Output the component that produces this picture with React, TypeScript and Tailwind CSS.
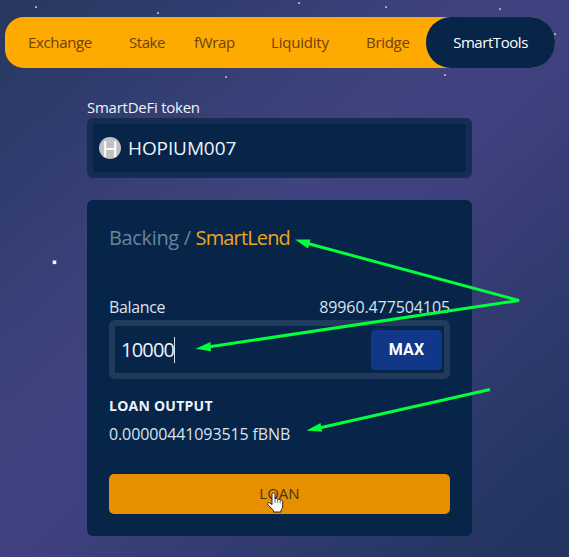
const tabs = [
  { label: "Exchange", slot: "w-[101px]", tracking: "tracking-[-0.35px]" },
  { label: "Stake", slot: "w-[65px]", tracking: "tracking-[-0.45px]" },
  { label: "fWrap", slot: "w-[77px]", tracking: "tracking-[-0.35px]" },
  { label: "Liquidity", slot: "w-[95px]", tracking: "tracking-[-0.2px]" },
  { label: "Bridge", slot: "w-[60px]", tracking: "tracking-[-0.3px]" },
];

const stars = [
  [36, 7], [158, 13], [226, 77], [299, 3], [386, 7], [500, 9], [555, 34], [445, 75],
];

function Starfield() {
  return (
    <svg className="pointer-events-none absolute inset-0 h-full w-full" viewBox="0 0 569 557">
      {stars.map(([x, y]) => (
        <rect key={`${x}-${y}`} x={x - 0.8} y={y - 0.8} width="1.8" height="1.8" fill="#b8bde4" />
      ))}
      <rect x="52.7" y="260.5" width="3.6" height="3.6" fill="#f4f5ff" />
    </svg>
  );
}

function Arrows() {
  return (
    <svg className="pointer-events-none absolute inset-0 h-full w-full" viewBox="0 0 569 557">
      <g fill="none" stroke="#00ff3c" strokeWidth="3" strokeLinejoin="miter">
        <path d="M306 243 519 300.5 208 347" />
        <path d="M319 428 490 389.5" />
      </g>
      <g fill="#00ff3c">
        <path d="M295 239.5 310.5 239.5 308 248.500Z" />
        <path d="M195.500 348.700 210.500 342 211 351.200Z" />
        <path d="M306.500 430.500 320.500 423 322 431.800Z" />
      </g>
    </svg>
  );
}

function HandCursor() {
  return (
    <svg className="absolute left-[158px] top-[18px] h-[22px] w-[17px]" viewBox="0 0 17 22">
      <path
        d="M5 2.200C5 .3 8 .3 8 2.200V7C8.500 6.200 10.500 6.400 10.700 7.600 11.400 6.900 13 7.200 13.200 8.400 14.200 7.700 15.700 8.300 15.700 9.700V14C15.700 16 14.500 17 14 18.500V20H6.500V18.500L1 12.800C-.1 11.200 1.500 9.900 2.900 10.900L5 12.600Z"
        fill="white"
        stroke="#17140f"
        strokeWidth="0.9"
      />
      <path d="M8 7V11M10.700 8V11M13.200 9V11.500" stroke="#333" strokeWidth="0.7" />
    </svg>
  );
}

export default function App() {
  return (
    <div className="relative h-[557px] w-[569px] overflow-hidden bg-[linear-gradient(138deg,#27385f_0%,#303c6d_17%,#394077_30%,#3f437e_42%,#3f417e_54%,#363c74_66%,#2b3969_80%,#22345f_96%)] font-['Open_Sans','Noto_Sans',sans-serif] text-[#eef3fb]">
      <Starfield />
      <div className="relative pt-[17px]">
        <nav className="ml-[5px] flex h-[51px] w-[550px] items-center rounded-l-[25px] rounded-r-[34px] bg-[#ffaa00] pl-[23px] text-[15px] text-[#6b430d]">
          {tabs.map((tab) => (
            <span key={tab.label} className={`${tab.slot} ${tab.tracking} shrink-0 whitespace-nowrap`}>
              {tab.label}
            </span>
          ))}
          <span className="flex h-[51px] w-[129px] shrink-0 items-center justify-center rounded-[25px] bg-[#072548] tracking-[-0.45px] text-white">
            SmartTools
          </span>
        </nav>

        <main className="ml-[87px] w-[385px] pt-[29px]">
          <label className="block h-[21px] whitespace-nowrap text-[15px] leading-[20px] tracking-[-0.25px]">SmartDeFi token</label>
          <div className="flex h-[60px] items-center gap-[7px] rounded-[6px] border-[6px] border-[#152c55] bg-[#072548] pl-[6px]">
            <span className="flex size-[22px] items-center justify-center rounded-full bg-[#bfc1c2] text-[22px] leading-none text-white">H</span>
            <span className="text-[19px] tracking-[-0.1px]">HOPIUM007</span>
          </div>

          <section className="mt-[22px] h-[336px] rounded-[6px] bg-[#072548] px-[22px] pt-[24px]">
            <h1 className="flex h-[28px] justify-between whitespace-nowrap pr-[160px] text-[20px] leading-[28px] text-[#6784a0]">
              <span className="tracking-[-0.35px]">Backing /</span>
              <span className="tracking-[-0.85px] text-[#eba51c]">SmartLend</span>
            </h1>
            <div className="mt-[44px] flex h-[24px] items-start justify-between text-[16px] leading-[22px] text-[#d8e3ef]">
              <span className="tracking-[-0.35px]">Balance</span>
              <span className="tracking-[-0.1px]">89960.477504105</span>
            </div>
            <div className="flex h-[59px] items-center rounded-[6px] border-[6px] border-[#203b5c] pl-[6px] pr-[2px]">
              <span className="text-[20px] tracking-[-0.8px]">10000</span>
              <span className="h-[26px] w-px bg-[#d8e3ef]" />
              <button className="ml-auto h-[40px] w-[71px] rounded-[4px] bg-[#103788] font-['Roboto',sans-serif] text-[16px] font-bold tracking-[0.1px] text-white">MAX</button>
            </div>
            <div className="mt-[16px] h-[22px] text-[14px] font-bold leading-[22px] tracking-[0.25px]">LOAN OUTPUT</div>
            <div className="mt-[5px] h-[24px] whitespace-nowrap text-[16px] leading-[24px] tracking-[-0.12px] text-[#d8e3ef]">0.00000441093515 fBNB</div>
            <button className="relative mt-[28px] block h-[40px] w-[341px] rounded-[5px] bg-[#e69000] text-[15px] text-[#413219]">
              <span className="relative -top-px">LOAN</span>
              <HandCursor />
            </button>
          </section>
        </main>
      </div>
      <Arrows />
    </div>
  );
}
